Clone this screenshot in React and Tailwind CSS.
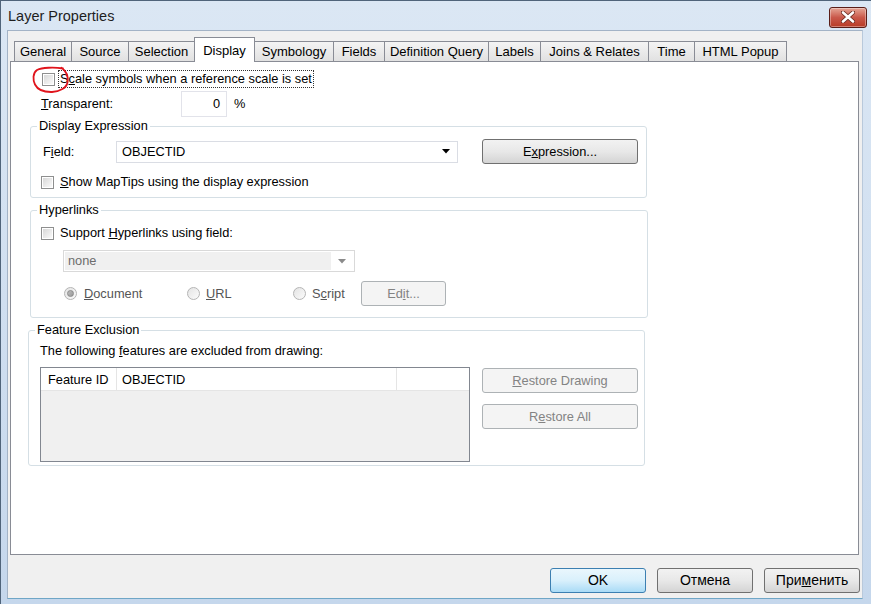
import React from 'react';

const tabs = [
  { label: 'General', w: 'w-[58px]' },
  { label: 'Source', w: 'w-[58px]' },
  { label: 'Selection', w: 'w-[67px]' },
  { label: 'Display', w: 'w-[61px]', active: true },
  { label: 'Symbology', w: 'w-[80px]' },
  { label: 'Fields', w: 'w-[52px]' },
  { label: 'Definition Query', w: 'w-[105px]' },
  { label: 'Labels', w: 'w-[53px]' },
  { label: 'Joins & Relates', w: 'w-[109px]' },
  { label: 'Time', w: 'w-[47px]' },
  { label: 'HTML Popup', w: 'w-[93px]' },
];

const Check = () => (
  <span className="block w-[13px] h-[13px] shrink-0 border border-[#8e8f8f] bg-white p-px">
    <span className="block w-full h-full bg-linear-to-br from-[#d8d8d8] to-[#fafafa]" />
  </span>
);

const Radio = ({ checked }) => (
  <span className="flex items-center justify-center w-[13px] h-[13px] shrink-0 rounded-full border border-[#b5b5b5] bg-linear-to-br from-[#e4e4e4] to-[#fbfbfb]">
    {checked && <span className="block w-[7px] h-[7px] rounded-full border border-[#8a8a8a] bg-linear-to-br from-[#bdbdbd] to-[#9a9a9a]" />}
  </span>
);

const Arrow = ({ color }) => (
  <svg width="8" height="5" viewBox="0 0 8 5">
    <path d="M0 0h8L4 4.5z" fill={color} />
  </svg>
);

const Btn = ({ children, disabled, primary, className = '' }) => {
  let look = 'border-[#707070] bg-linear-to-b from-[#f2f2f2] via-[#e8e8e8] to-[#d4d4d4] text-black';
  if (disabled) look = 'border-[#adb2b5] bg-[#f4f4f4] text-[#838383]';
  if (primary) look = 'border-[#3c7fb1] bg-linear-to-b from-[#eaf6fd] via-[#d9f0fc] to-[#a9dbf6] text-black';
  return (
    <div className={`flex items-center justify-center rounded-[3px] border ${look} ${className}`}>
      {children}
    </div>
  );
};

const Group = ({ title, className = '', children }) => (
  <fieldset className={`border border-[#d5dfe5] rounded-[3px] p-0 ${className}`}>
    <legend className="ml-[6px] px-[2px] leading-[14px]">{title}</legend>
    {children}
  </fieldset>
);

export default function App() {
  return (
    <div className="relative w-[871px] h-[604px] overflow-hidden bg-linear-to-b from-[#dbe7f4] to-[#c5d7ec] border-l border-t border-[#50647a] font-['Liberation_Sans',Arial,sans-serif] text-[12.8px] text-black">
      {/* title bar */}
      <div className="h-[29px] flex items-center justify-between pl-[7px] pr-[4px]">
        <span className="text-[14.5px] text-[#1e1e1e] mt-[2px]">Layer Properties</span>
        <div className="w-[38px] h-[21px] mt-[3px] rounded-[3px] border border-[#5a1e18] bg-linear-to-b from-[#e4a596] via-[#c9584a] to-[#b73a24] flex items-center justify-center shadow-[inset_0_0_0_1px_rgba(255,255,255,0.35)]">
          <svg width="14" height="12" viewBox="0 0 14 12">
            <path d="M2 1.5L12 10.5M12 1.5L2 10.5" stroke="#6b2a20" strokeWidth="4.2" strokeLinecap="round" />
            <path d="M2 1.5L12 10.5M12 1.5L2 10.5" stroke="#ffffff" strokeWidth="2.6" strokeLinecap="round" />
          </svg>
        </div>
      </div>

      {/* window body */}
      <div className="ml-[6px] w-[856px] h-[569px] bg-[#f0f0f0] border border-[#a3b3c6] border-r-[#b9c9db] border-b-[#6fa6c6]">
        {/* tabs */}
        <div className="mt-[6px] ml-[6px] h-[24px] flex items-end text-[13px]">
          {tabs.map((t, i) =>
            t.active ? (
              <div
                key={t.label}
                className={`${t.w} -ml-px h-[25px] mb-[-1px] relative z-10 bg-white border border-b-0 border-[#898c95] flex items-start justify-center pt-[3px]`}
              >
                {t.label}
              </div>
            ) : (
              <div
                key={t.label}
                className={`${t.w} ${i === 0 ? '' : '-ml-px'} h-[20px] border border-b-0 border-[#898c95] bg-linear-to-b from-[#f4f4f4] to-[#e1e1e1] flex items-center justify-center`}
              >
                {t.label}
              </div>
            )
          )}
        </div>

        {/* tab page */}
        <div className="ml-[2px] w-[849px] h-[494px] bg-white border border-[#898c95] flex flex-col">
          {/* scale symbols */}
          <div className="relative mt-[8px] ml-[31px] h-[18px] flex items-center">
            <Check />
            <span className="ml-[3px] px-px leading-[16px] border border-dotted border-[#333]">
              S<u>c</u>ale symbols when a reference scale is set
            </span>
            <svg className="absolute left-[-10px] top-[-4px]" width="38" height="28" viewBox="0 0 38 28">
              <path
                d="M31 2.5C22 1 10 1.5 5 4C0.6 7 0.8 14 3 18.5C5.5 23.5 12 26.2 20 26C28 25.6 34.6 22 35.6 16C36.3 11 34.6 5.5 29.5 1.8"
                fill="none"
                stroke="#e0141c"
                strokeWidth="1.8"
                strokeLinecap="round"
              />
            </svg>
          </div>

          {/* transparent */}
          <div className="mt-[3px] ml-[30px] h-[26px] flex items-center">
            <span className="w-[140px]"><u>T</u>ransparent:</span>
            <div className="w-[46px] h-[26px] border border-[#e2e3ea] flex items-center justify-end pr-[6px]">0</div>
            <span className="ml-[7px]">%</span>
          </div>

          {/* display expression */}
          <Group title="Display Expression" className="mt-[2px] ml-[19px] w-[617px] pb-[6px]">
            <div className="mt-[6px] ml-[12px] h-[25px] flex items-center">
              <span className="w-[73px]">F<u>i</u>eld:</span>
              <div className="w-[342px] h-[22px] border border-[#dadde4] flex items-center justify-between pl-[5px] pr-[7px]">
                <span>OBJECTID</span>
                <Arrow color="#000" />
              </div>
              <Btn className="ml-[24px] w-[156px] h-[25px]">
                E<u>x</u>pression...
              </Btn>
            </div>
            <div className="mt-[9px] ml-[10px] h-[18px] flex items-center">
              <Check />
              <span className="ml-[6px]"><u>S</u>how MapTips using the display expression</span>
            </div>
          </Group>

          {/* hyperlinks */}
          <Group title="Hyperlinks" className="mt-[5px] ml-[19px] w-[618px] pb-[11px]">
            <div className="mt-[7px] ml-[10px] h-[18px] flex items-center">
              <Check />
              <span className="ml-[6px]">Support <u>H</u>yperlinks using field:</span>
            </div>
            <div className="mt-[8px] ml-[32px] w-[292px] h-[22px] border border-[#d9d9d9] bg-white flex items-center p-px">
              <div className="w-[266px] h-full bg-[#f0f0f0] flex items-center pl-[3px] text-[#6d6d6d]">none</div>
              <div className="flex-1 flex items-center justify-center">
                <Arrow color="#8a8a8a" />
              </div>
            </div>
            <div className="mt-[9px] ml-[33px] h-[25px] flex items-center text-[#555]">
              <div className="w-[123px] flex items-center">
                <Radio checked />
                <span className="ml-[7px]"><u>D</u>ocument</span>
              </div>
              <div className="w-[106px] flex items-center">
                <Radio />
                <span className="ml-[6px]"><u>U</u>RL</span>
              </div>
              <div className="w-[68px] flex items-center">
                <Radio />
                <span className="ml-[6px]">S<u>c</u>ript</span>
              </div>
              <Btn disabled className="w-[85px] h-[25px]">
                Ed<u>i</u>t...
              </Btn>
            </div>
          </Group>

          {/* feature exclusion */}
          <Group title="Feature Exclusion" className="mt-[5px] ml-[17px] w-[617px] pb-[3px]">
            <div className="mt-[7px] ml-[11px] leading-[14px]">
              The following <u>f</u>eatures are excluded from drawing:
            </div>
            <div className="mt-[9px] ml-[11px] flex items-start">
              <div className="w-[430px] h-[95px] border border-[#828790] bg-[#f0f0f0] flex flex-col">
                <div className="h-[23px] bg-white border-b border-[#e5e5e5] flex">
                  <div className="w-[76px] border-r border-[#e5e5e5] flex items-center pl-[7px] pt-[2px]">Feature ID</div>
                  <div className="w-[280px] border-r border-[#e5e5e5] flex items-center pl-[5px] pt-[2px]">OBJECTID</div>
                  <div className="flex-1" />
                </div>
              </div>
              <div className="ml-[12px] mt-px flex flex-col gap-[11px]">
                <Btn disabled className="w-[156px] h-[25px]">
                  <span><u>R</u>estore Drawing</span>
                </Btn>
                <Btn disabled className="w-[156px] h-[25px]">
                  <span>R<u>e</u>store All</span>
                </Btn>
              </div>
            </div>
          </Group>
        </div>

        {/* dialog buttons */}
        <div className="mt-[13px] pr-[2px] flex justify-end gap-[11px] text-[14px]">
          <Btn primary className="w-[96px] h-[25px]">OK</Btn>
          <Btn className="w-[96px] h-[25px]">Отмена</Btn>
          <Btn className="w-[96px] h-[25px]">
            <span>При<u>м</u>енить</span>
          </Btn>
        </div>
      </div>
    </div>
  );
}
